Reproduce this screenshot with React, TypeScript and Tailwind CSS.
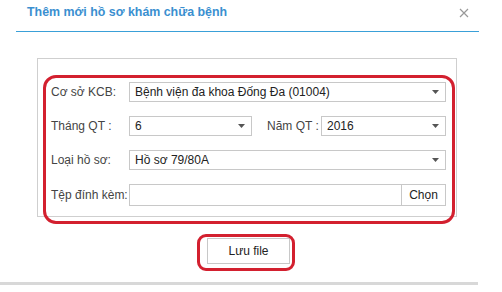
import React from "react";

function Arrow() {
  return (
    <svg width="7" height="4" viewBox="0 0 7 4" className="absolute right-[6px] top-1/2 -translate-y-1/2">
      <path d="M0 0 L7 0 L3.5 4 Z" fill="#555" />
    </svg>
  );
}

function Select({ value, className }: { value: string; className: string }) {
  return (
    <div className={`relative h-[20px] border border-[#c8c8c8] bg-white pl-[5px] flex items-center text-[12px] text-[#222] ${className}`}>
      {value}
      <Arrow />
    </div>
  );
}

export default function App() {
  return (
    <div className="w-[502px] h-[292px] bg-white relative overflow-hidden" style={{ fontFamily: '"Liberation Sans", Arial, sans-serif' }}>
      <div className="mx-[16px] w-[463px] flex flex-col">
        <div className="h-[32px] border-b border-[#3aa0d8] flex items-center justify-between pl-[11px] pr-[10px] pb-[6px]">
          <span className="text-[12.4px] font-bold text-[#3a8fd0]">Thêm mới hồ sơ khám chữa bệnh</span>
          <svg width="10" height="10" viewBox="0 0 10 10">
            <path d="M1 1 L9 9 M9 1 L1 9" stroke="#999" strokeWidth="1.2" />
          </svg>
        </div>
        <div className="mt-[26px] ml-[21px] w-[420px] border border-[#cfcfcf] pt-[23px] pb-[10px] pl-[13px] pr-[10px] flex flex-col gap-[14px] text-[12px] text-[#444]">
          <div className="flex items-center">
            <span className="w-[78px]">Cơ sở KCB:</span>
            <Select value="Bệnh viện đa khoa Đống Đa (01004)" className="w-[317px]" />
          </div>
          <div className="flex items-center">
            <span className="w-[78px]">Tháng QT :</span>
            <Select value="6" className="w-[123px]" />
            <span className="ml-[15px] w-[54px]">Năm QT :</span>
            <Select value="2016" className="w-[125px]" />
          </div>
          <div className="flex items-center">
            <span className="w-[78px]">Loại hồ sơ:</span>
            <Select value="Hồ sơ 79/80A" className="w-[317px]" />
          </div>
          <div className="flex items-center">
            <span className="w-[78px]">Tệp đính kèm:</span>
            <div className="w-[317px] h-[22px] flex border border-[#c8c8c8]">
              <div className="flex-1" />
              <div className="w-[44px] border-l border-[#c8c8c8] flex items-center justify-center text-[12px] text-[#222]">Chọn</div>
            </div>
          </div>
        </div>
        <div className="flex justify-center mt-[21px]">
          <div className="w-[83px] h-[26px] border border-[#c8c8c8] flex items-center justify-center text-[12px] text-[#222] ml-[2px]">Lưu file</div>
        </div>
        <div className="mt-[18px] h-[3px] bg-[#d8d8d8] -ml-[16px] w-[478px]" />
      </div>
      <div className="absolute left-[43px] top-[75px] w-[412px] h-[149px] border-[3px] border-[#d3202f] rounded-[13px] pointer-events-none" />
      <div className="absolute left-[197px] top-[234px] w-[98px] h-[37px] border-[3px] border-[#d3202f] rounded-[9px] pointer-events-none" />
    </div>
  );
}
